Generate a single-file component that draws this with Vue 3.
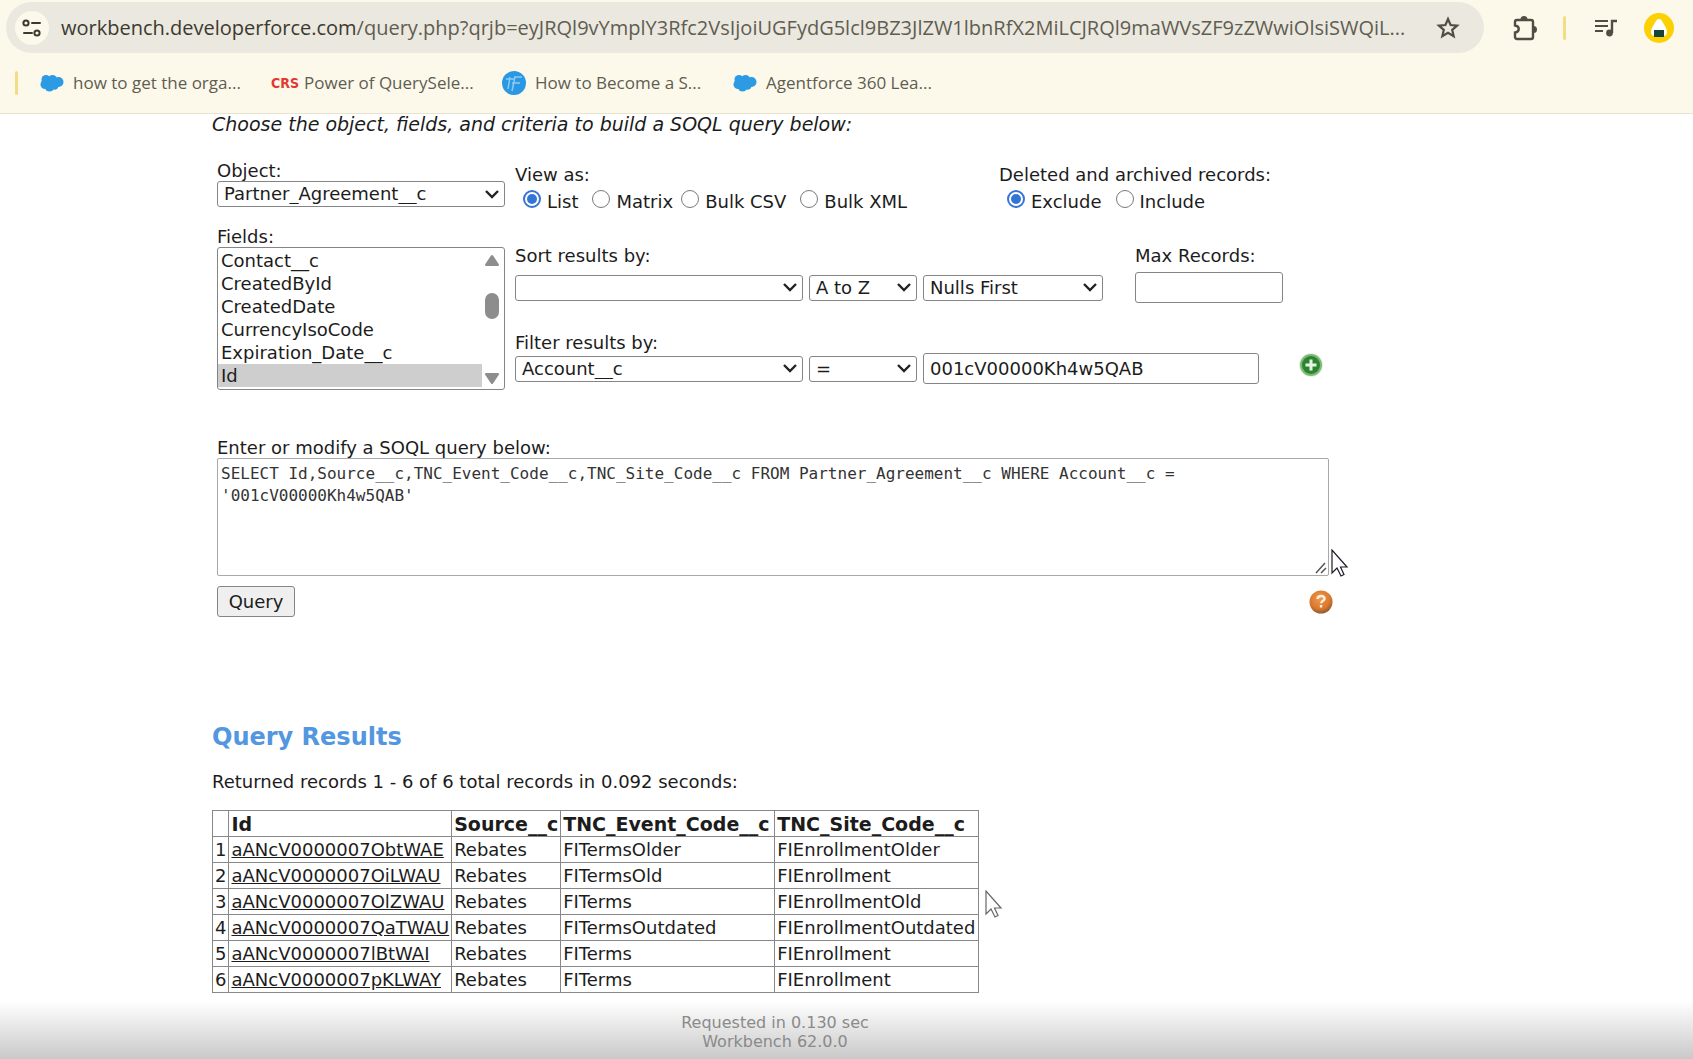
<script setup>
import { ref } from 'vue'

const url = {
  host: 'workbench.developerforce.com',
  path: '/query.php?qrjb=eyJRQl9vYmplY3Rfc2VsIjoiUGFydG5lcl9BZ3JlZW1lbnRfX2MiLCJRQl9maWVsZF9zZWwiOlsiSWQiL...',
}
const bookmarks = [
  { icon: 'cloud', text: 'how to get the orga...' },
  { icon: 'crs', text: 'Power of QuerySele...' },
  { icon: 'tf', text: 'How to Become a S...' },
  { icon: 'cloud', text: 'Agentforce 360 Lea...' },
]
const fields = ['Contact__c', 'CreatedById', 'CreatedDate', 'CurrencyIsoCode', 'Expiration_Date__c', 'Id']
const selectedFields = ref(['Id'])
const views = [
  { text: 'List', spaced: true },
  { text: 'Matrix', spaced: false },
  { text: 'Bulk CSV', spaced: true },
  { text: 'Bulk XML', spaced: false },
]
const view = ref('List')
const deleted = ref('Exclude')
const filterValue = ref('001cV00000Kh4w5QAB')
const maxRecords = ref('')
const soql = ref(
  "SELECT Id,Source__c,TNC_Event_Code__c,TNC_Site_Code__c FROM Partner_Agreement__c WHERE Account__c =\n'001cV00000Kh4w5QAB'"
)
const columns = ['Id', 'Source__c', 'TNC_Event_Code__c', 'TNC_Site_Code__c']
const rows = [
  ['aANcV0000007ObtWAE', 'Rebates', 'FITermsOlder', 'FIEnrollmentOlder'],
  ['aANcV0000007OiLWAU', 'Rebates', 'FITermsOld', 'FIEnrollment'],
  ['aANcV0000007OlZWAU', 'Rebates', 'FITerms', 'FIEnrollmentOld'],
  ['aANcV0000007QaTWAU', 'Rebates', 'FITermsOutdated', 'FIEnrollmentOutdated'],
  ['aANcV0000007lBtWAI', 'Rebates', 'FITerms', 'FIEnrollment'],
  ['aANcV0000007pKLWAY', 'Rebates', 'FITerms', 'FIEnrollment'],
]
</script>

<template>
  <div class="page">
    <header class="browser">
      <div class="toolbar">
        <div class="omnibox">
          <button class="site-info" aria-label="View site information">
            <svg width="20" height="20" viewBox="0 0 20 20" fill="none" stroke="#3b3a31" stroke-width="2">
              <circle cx="4" cy="5" r="2.6" />
              <path d="M10 5h8M2 15h8" stroke-linecap="round" />
              <circle cx="15" cy="15" r="2.6" />
            </svg>
          </button>
          <span class="url"><span class="host">{{ url.host }}</span>{{ url.path }}</span>
          <button class="bare" aria-label="Bookmark this tab">
            <svg width="24" height="24" viewBox="0 0 24 24" fill="none" stroke="#504e43" stroke-width="2.2">
              <path d="M12 3l2.600 6 6.500.6-4.900 4.300 1.500 6.400-5.700-3.400-5.700 3.400 1.500-6.400-4.900-4.300 6.500-.6z" />
            </svg>
          </button>
        </div>
        <button class="bare ext" aria-label="Extensions">
          <svg width="26" height="28" viewBox="0 0 26 28">
            <path d="M5 6h14a2 2 0 0 1 2 2v15a2 2 0 0 1-2 2H5a2 2 0 0 1-2-2v-4.500c5-.5 5-6.500 0-7V8a2 2 0 0 1 2-2z" fill="none" stroke="#504e43" stroke-width="2.400" />
            <path d="M8.500 5.500a3.500 3.500 0 0 1 7 0zM21.500 12a3.500 3.500 0 0 1 0 7z" fill="#504e43" />
          </svg>
        </button>
        <span class="divider"></span>
        <button class="bare media" aria-label="Media controls">
          <svg width="24" height="20" viewBox="0 0 24 20" fill="none" stroke="#504e43" stroke-width="2">
            <path d="M1 3h13M1 8h13M1 13h8" />
            <path d="M18 15V3h5" stroke-width="2.400" />
            <circle cx="15.500" cy="15" r="3.400" fill="#504e43" stroke="none" />
          </svg>
        </button>
        <button class="bare" aria-label="Profile">
          <svg width="30" height="30" viewBox="0 0 30 30">
            <circle cx="15" cy="15" r="15" fill="#fbd103" />
            <path d="M15 6c2 0 3 2 4.500 4.500S23 16 23 19s-2 4-4 4h-8c-2 0-4-1-4-4s2-6 3.500-8.500S13 6 15 6z" fill="#fff" />
            <path d="M10 17h10v7H10z" fill="#17453b" />
          </svg>
        </button>
      </div>
      <nav class="bookmarks">
        <span class="divider"></span>
        <a v-for="b in bookmarks" :key="b.text" href="#" class="bookmark">
          <svg v-if="b.icon === 'cloud'" width="24" height="18" viewBox="0 0 24 18" fill="#2d9be4">
            <circle cx="6" cy="5.500" r="4.500" /><circle cx="12.500" cy="5.500" r="4.500" /><circle cx="18.500" cy="8" r="5" />
            <circle cx="5" cy="10.500" r="4.500" /><circle cx="9.500" cy="13" r="4.600" /><circle cx="14.500" cy="11.500" r="4.200" />
          </svg>
          <span v-else-if="b.icon === 'crs'" class="crs">CRS</span>
          <svg v-else width="24" height="24" viewBox="0 0 24 24">
            <circle cx="12" cy="12" r="12" fill="#2b98e3" />
            <path d="M4 8h8M8 6l-2 12M12 6h8M13 6l-3 14M10 12h8" fill="none" stroke="#8ccbf3" stroke-width="1.500" />
          </svg>
          {{ b.text }}
        </a>
      </nav>
    </header>

    <main class="content">
      <p class="intro">Choose the object, fields, and criteria to build a SOQL query below:</p>

      <form class="builder" @submit.prevent>
        <div class="criteria">
          <div class="picker">
            <label for="object">Object:</label>
            <select id="object" class="wide">
              <option>Partner_Agreement__c</option>
            </select>
            <label for="fields" class="fields-label">Fields:</label>
            <div class="listbox">
              <select id="fields" v-model="selectedFields" multiple size="6">
                <option v-for="f in fields" :key="f">{{ f }}</option>
              </select>
              <svg class="scroll" width="22" height="141" viewBox="0 0 22 141" fill="#8d8d8d">
                <path d="M9 7.500q1-1 2 0l6 9q0 1.500-1 1.500H4q-1 0-1-1.500z" />
                <rect x="3" y="45" width="14" height="26" rx="7" />
                <path d="M9 135.500q1 1 2 0l6-9q0-1.500-1-1.500H4q-1 0-1 1.500z" />
              </svg>
            </div>
          </div>

          <div class="options">
            <div class="line views">
              <fieldset class="view-set">
                <legend>View as:</legend>
                <div class="radios">
                  <label v-for="v in views" :key="v.text" :class="{ spaced: v.spaced }">
                    <input v-model="view" type="radio" name="view" :value="v.text" />{{ v.text }}
                  </label>
                </div>
              </fieldset>
              <fieldset>
                <legend>Deleted and archived records:</legend>
                <div class="radios">
                  <label class="spaced"><input v-model="deleted" type="radio" name="deleted" value="Exclude" />Exclude</label>
                  <label><input v-model="deleted" type="radio" name="deleted" value="Include" />Include</label>
                </div>
              </fieldset>
            </div>

            <div class="line sort">
              <div>
                <label for="sort">Sort results by:</label>
                <div class="controls">
                  <select id="sort" class="wide"><option></option></select>
                  <select class="short" aria-label="Sort direction"><option>A to Z</option></select>
                  <select class="medium" aria-label="Null ordering"><option>Nulls First</option></select>
                </div>
              </div>
              <div>
                <label for="max">Max Records:</label>
                <div class="controls"><input id="max" v-model="maxRecords" type="text" class="max" /></div>
              </div>
            </div>

            <div class="filter">
              <label for="filter">Filter results by:</label>
              <div class="controls">
                <select id="filter" class="wide"><option>Account__c</option></select>
                <select class="short" aria-label="Filter operator"><option>=</option></select>
                <input v-model="filterValue" type="text" class="value" aria-label="Filter value" />
                <button type="button" class="bare add" aria-label="Add filter">
                  <svg width="28" height="28" viewBox="0 0 28 28">
                    <circle cx="14" cy="12" r="12" fill="#e4f2e2" />
                    <circle cx="14" cy="12" r="11" fill="#7db878" />
                    <circle cx="14" cy="12" r="9" fill="#2d8430" />
                    <path d="M14 6.500v11M8.500 12h11" stroke="#e6f5e2" stroke-width="3" />
                  </svg>
                </button>
              </div>
            </div>
          </div>
        </div>

        <label for="soql" class="soql-label">Enter or modify a SOQL query below:</label>
        <div class="soql-box">
          <textarea id="soql" v-model="soql" spellcheck="false"></textarea>
          <svg class="grip" width="12" height="12" viewBox="0 0 12 12" stroke="#555" stroke-width="1.500">
            <path d="M1 11L10 1M6 11l5-5" />
          </svg>
          <svg class="pointer at-box" width="18" height="28" viewBox="0 0 18 28">
            <path d="M1 1v23l5-5 4 8 3-1.500-3.500-7.500H16z" fill="#fff" stroke="#1b1b2b" stroke-width="1.200" />
          </svg>
        </div>
        <div class="submit">
          <button type="submit" class="query">Query</button>
          <button type="button" class="bare" aria-label="Help">
            <svg width="24" height="24" viewBox="0 0 24 24">
              <defs>
                <radialGradient id="orb" cx="45%" cy="35%" r="65%">
                  <stop offset="0" stop-color="#ee9a50" /><stop offset=".7" stop-color="#d9772c" /><stop offset="1" stop-color="#8d5a30" />
                </radialGradient>
              </defs>
              <circle cx="12" cy="12" r="11.500" fill="url(#orb)" />
              <path d="M8.500 9c.3-4 7.500-3.800 7-.2-.3 2-3.300 2-3.300 4.400M12 15v2.400" fill="none" stroke="#fdeedd" stroke-width="2.400" />
            </svg>
          </button>
        </div>
      </form>

      <section class="results">
        <h2>Query Results</h2>
        <p>Returned records 1 - 6 of 6 total records in 0.092 seconds:</p>
        <div class="table-box">
          <table>
            <colgroup>
              <col class="c-num" />
              <col class="c-id" />
              <col class="c-source" />
              <col class="c-event" />
              <col class="c-site" />
            </colgroup>
            <thead>
              <tr>
                <th></th>
                <th v-for="c in columns" :key="c">{{ c }}</th>
              </tr>
            </thead>
            <tbody>
              <tr v-for="(row, i) in rows" :key="row[0]">
                <td>{{ i + 1 }}</td>
                <td><a href="#">{{ row[0] }}</a></td>
                <td v-for="(cell, j) in row.slice(1)" :key="j">{{ cell }}</td>
              </tr>
            </tbody>
          </table>
          <svg class="pointer at-table" width="18" height="28" viewBox="0 0 18 28">
            <path d="M1 1v23l5-5 4 8 3-1.500-3.500-7.500H16z" fill="#fff" stroke="#666" stroke-width="1.200" />
          </svg>
        </div>
      </section>
    </main>

    <footer class="footer">
      <div class="footer-text">Requested in 0.130 sec<br />Workbench 62.0.0</div>
    </footer>
  </div>
</template>

<style>
body {
  background: #fff;
  overflow: hidden;
}
</style>

<style scoped>
.page {
  color: #1c1c1c;
  font: 18px/20px Verdana, "DejaVu Sans", sans-serif;
}
.page * {
  box-sizing: border-box;
}
button,
select,
input {
  font: inherit;
  color: inherit;
  margin: 0;
}
.bare {
  display: flex;
  padding: 0;
  border: 0;
  background: none;
}

/* Browser chrome */
.browser {
  height: 114px;
  padding-top: 2px;
  background: #fcf9eb;
  border-bottom: 1px solid #e6e3d0;
  color: #5f5d52;
  font-family: "Segoe UI", "Open Sans", sans-serif;
}
.toolbar {
  display: flex;
  align-items: center;
  padding: 0 19px 0 6px;
}
.omnibox {
  display: flex;
  align-items: center;
  flex: 1;
  min-width: 0;
  height: 51px;
  padding: 0 24px 0 9px;
  border-radius: 26px;
  background: #ebe8df;
}
.site-info {
  display: flex;
  align-items: center;
  justify-content: center;
  width: 34px;
  height: 34px;
  margin-right: 12px;
  padding: 0;
  border: 0;
  border-radius: 50%;
  background: #fcf9eb;
}
.url {
  flex: 1;
  min-width: 0;
  overflow: hidden;
  white-space: nowrap;
  font-size: 20px;
  line-height: 32px;
}
.host {
  color: #3b3a31;
}
.divider {
  width: 3px;
  height: 24px;
  border-radius: 2px;
  background: #f3dd84;
}
.ext {
  margin: 0 25px 0 28px;
}
.media {
  margin: 0 26px 0 28px;
}
.bookmarks {
  display: flex;
  align-items: center;
  height: 60px;
  padding-left: 15px;
}
.bookmark {
  display: flex;
  align-items: center;
  gap: 9px;
  width: 231px;
  color: inherit;
  text-decoration: none;
  white-space: nowrap;
  font-size: 17px;
}
.bookmarks .divider {
  margin-right: 22px;
}
.crs {
  width: 24px;
  color: #e03a34;
  font: bold 14px/20px "Liberation Sans Narrow", "DejaVu Sans Condensed", sans-serif;
}

/* Query builder */
.content {
  max-width: 1338px;
  padding-left: 212px;
}
.intro {
  margin: 0;
  font-size: 19px;
  font-style: italic;
}
.builder {
  padding: 27px 0 0 5px;
}
.criteria {
  display: flex;
  gap: 10px;
}
.picker {
  flex: 0 0 288px;
  display: flex;
  flex-direction: column;
}
.fields-label {
  margin-top: 20px;
}
select {
  height: 26px;
  padding: 0 24px 0 6px;
  border: 1px solid #858585;
  border-radius: 3px;
  appearance: none;
  background: #fff url("data:image/svg+xml,%3Csvg xmlns='http://www.w3.org/2000/svg' width='14' height='9' fill='none' stroke='%23222' stroke-width='2.400'%3E%3Cpath d='M1 1l6 6 6-6'/%3E%3C/svg%3E") no-repeat right 5px center;
}
input[type="text"] {
  height: 31px;
  padding: 0 6px;
  border: 1px solid #858585;
  border-radius: 3px;
  background: #fff;
}
.wide {
  width: 288px;
}
.short {
  width: 108px;
}
.medium {
  width: 180px;
}
.max {
  width: 148px;
}
.value {
  width: 336px;
}
.listbox {
  display: flex;
  border: 1px solid #858585;
  border-radius: 3px;
}
.listbox select {
  flex: 1;
  height: 141px;
  padding: 1px 0 2px;
  border: 0;
  background: none;
  overflow: hidden;
}
.listbox option {
  height: 23px;
  min-height: 23px;
  padding: 1px 3px 2px;
  line-height: 20px;
}
.listbox option:checked {
  background: #cecece linear-gradient(#cecece, #cecece);
  color: #1c1c1c;
}
.options {
  flex: 1;
  padding-top: 4px;
}
.line {
  display: flex;
}
.sort {
  gap: 32px;
  margin-top: 32px;
}
fieldset {
  margin: 0;
  padding: 0;
  border: 0;
}
.view-set {
  flex: 0 0 484px;
}
legend {
  padding: 0;
}
.radios {
  display: flex;
  gap: 8px;
  padding: 5px 0 0 8px;
  line-height: 24px;
}
.radios label {
  display: flex;
  gap: 6px;
}
.radios .spaced {
  padding-right: 6px;
}
input[type="radio"] {
  appearance: none;
  width: 18px;
  height: 18px;
  border: 1px solid #7a7a7a;
  border-radius: 50%;
  background: #fff;
}
input[type="radio"]:checked {
  border: 2px solid #3474d4;
  background: #3474d4 content-box;
  padding: 2px;
}
.controls {
  display: flex;
  align-items: center;
  gap: 6px;
  height: 31px;
}
.sort .controls {
  margin-top: 6px;
}
.filter {
  margin-top: 30px;
}
.add {
  align-self: flex-start;
  margin-left: 32px;
}
.soql-label {
  display: block;
  margin-top: 48px;
}
.soql-box {
  position: relative;
  width: 1112px;
}
textarea {
  display: block;
  width: 100%;
  height: 118px;
  padding: 4px 3px;
  border: 1px solid #a8a8a8;
  border-radius: 2px;
  resize: none;
  color: #333;
  font: 16px/22px Consolas, "DejaVu Sans Mono", monospace;
}
.grip {
  position: absolute;
  right: 2px;
  bottom: 2px;
}
.pointer {
  position: absolute;
}
.at-box {
  left: 100%;
  bottom: -1px;
  margin-left: 2px;
}
.submit {
  display: flex;
  align-items: center;
  justify-content: space-between;
  margin-top: 10px;
  padding-right: 5px;
}
.query {
  width: 78px;
  height: 31px;
  padding: 0;
  border: 1px solid #858585;
  border-radius: 3px;
  background: #efefef;
}

/* Results */
.results {
  padding-top: 105px;
}
h2 {
  margin: 0;
  color: #5297e0;
  font-size: 24px;
  line-height: 30px;
}
.results p {
  margin: 20px 0 18px;
}
.table-box {
  position: relative;
  width: fit-content;
}
table {
  border-collapse: collapse;
}
.c-num {
  width: 16px;
}
.c-id {
  width: 221px;
}
.c-source {
  width: 109px;
}
.c-event {
  width: 214px;
}
.c-site {
  width: 204px;
}
th,
td {
  height: 26px;
  padding: 0 2px;
  border: 1px solid #888;
  text-align: left;
  white-space: nowrap;
}
th {
  font-size: 19px;
}
td a {
  color: inherit;
}
.at-table {
  left: 100%;
  top: 80px;
  margin-left: 6px;
}

.footer {
  height: 59px;
  margin-top: 8px;
  padding-top: 12px;
  background: linear-gradient(#fff, #c8c8c8);
  color: #8a8a8a;
  font-size: 16px;
  line-height: 19px;
  text-align: center;
}
.footer-text {
  max-width: 1126px;
  margin-left: 212px;
}
</style>
